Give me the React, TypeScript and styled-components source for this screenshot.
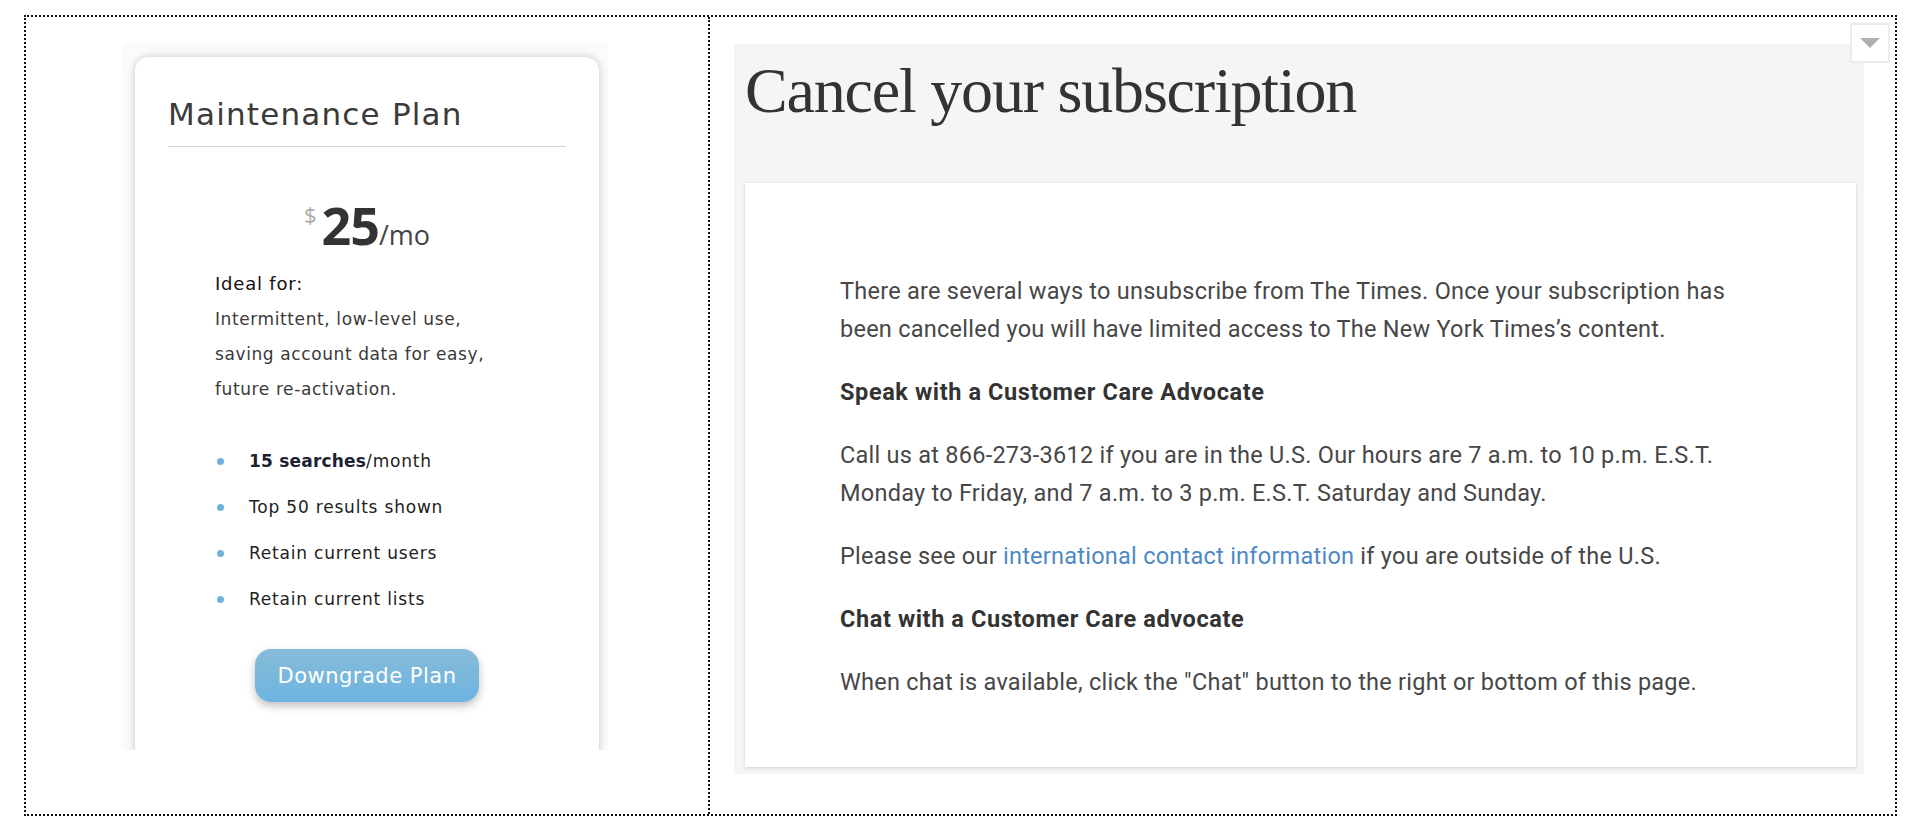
import styled, { createGlobalStyle } from 'styled-components';

const GlobalStyle = createGlobalStyle`
  html, body {
    margin: 0;
    padding: 0;
    background: #fff;
  }
  body {
    font-family: 'Liberation Sans', Arial, sans-serif;
  }
`;

const Frame = styled.div`
  margin: 15px 0 0 24px;
  width: 1873px;
  height: 801px;
  box-sizing: border-box;
  border: 2px dotted #111;
  display: grid;
  grid-template-columns: 682px 1fr;
`;

const LeftCell = styled.div`
  padding: 26px 0 0 96px;
  box-sizing: border-box;
`;

const CardClip = styled.div`
  width: 486px;
  height: 707px;
  overflow: hidden;
  padding: 14px 9px 0 13px;
  box-sizing: border-box;
  background: #fbfbfb;
`;

const PlanCard = styled.div`
  height: 760px;
  background: #fff;
  border-radius: 14px;
  box-shadow: 0 0 9px rgba(0, 0, 0, 0.22);
  padding: 39px 33px 0;
  box-sizing: border-box;
  display: flex;
  flex-direction: column;
  font-family: 'DejaVu Sans', 'Noto Sans', sans-serif;
  color: #333;
`;

const PlanTitle = styled.div`
  font-size: 31px;
  line-height: 36px;
  letter-spacing: 1.2px;
  color: #3a3a3a;
`;

const Rule = styled.div`
  margin-top: 14px;
  height: 1px;
  background: #d6d6d6;
`;

const PriceRow = styled.div`
  margin-top: 52px;
  height: 52px;
  display: flex;
  justify-content: center;
  align-items: baseline;
  line-height: 52px;
  font-family: 'Open Sans', sans-serif;
  color: #333;
`;

const Currency = styled.span`
  font-size: 22px;
  color: #aaa;
  align-self: flex-start;
  line-height: 22px;
  margin-top: 4px;
  margin-right: 5px;
`;

const Amount = styled.span`
  font-size: 52px;
  font-weight: 700;
  letter-spacing: -1px;
`;

const Period = styled.span`
  font-size: 27px;
  font-weight: 400;
  color: #444;
`;

const IdealBlock = styled.div`
  margin: 21px 0 0 47px;
`;

const IdealLabel = styled.div`
  font-size: 18px;
  line-height: 24px;
  letter-spacing: 0.8px;
  color: #111;
`;

const IdealText = styled.div`
  margin-top: 6px;
  font-size: 17px;
  line-height: 35px;
  letter-spacing: 0.6px;
  color: #3a3a3a;
`;

const FeatureList = styled.ul`
  list-style: none;
  margin: 31px 0 0 47px;
  padding: 0;
`;

const Feature = styled.li`
  display: flex;
  align-items: center;
  height: 46px;
  font-size: 17px;
  letter-spacing: 0.8px;
  color: #222;

  &::before {
    content: '';
    width: 7px;
    height: 7px;
    border-radius: 50%;
    background: #6fb0dc;
    margin: 0 25px 0 2px;
    flex: 0 0 auto;
  }

  b {
    color: #1d2233;
    letter-spacing: 0.2px;
  }
`;

const DowngradeButton = styled.button`
  margin: 27px auto 0;
  width: 224px;
  height: 53px;
  border: none;
  border-radius: 16px;
  background: linear-gradient(#88bbd8, #6cb4e1);
  box-shadow: 0 4px 8px rgba(0, 0, 0, 0.25);
  color: #fff;
  font-family: 'DejaVu Sans', 'Noto Sans', sans-serif;
  font-size: 21px;
  letter-spacing: 0.5px;
  padding: 0;
  cursor: pointer;
`;

const RightCell = styled.div`
  position: relative;
  border-left: 2px dotted #111;
  padding: 27px 31px 0 24px;
  box-sizing: border-box;
`;

const MenuToggle = styled.div`
  position: absolute;
  top: 6px;
  right: 5px;
  width: 40px;
  height: 40px;
  box-sizing: border-box;
  border: 2px solid #ececec;
  background: #fff;
  display: flex;
  align-items: center;
  justify-content: center;
`;

const GrayPanel = styled.div`
  height: 730px;
  background: #f5f5f3;
  padding: 15px 8px 7px 11px;
  box-sizing: border-box;
  display: flex;
  flex-direction: column;
`;

const PageTitle = styled.h1`
  margin: 0;
  font-family: 'Liberation Serif', 'Times New Roman', serif;
  font-weight: 400;
  font-size: 64px;
  line-height: 64px;
  letter-spacing: -1.2px;
  color: #333;
`;

const InfoCard = styled.div`
  margin-top: 60px;
  flex: 1;
  background: #fff;
  box-shadow: 0 1px 3px rgba(0, 0, 0, 0.16);
  padding: 89px 40px 0 95px;
  box-sizing: border-box;
  font-family: Roboto, 'Liberation Sans', sans-serif;
  color: #474747;
`;

const Para = styled.p`
  margin: 0 0 25px;
  font-size: 23.5px;
  line-height: 38px;
  letter-spacing: 0.25px;
`;

const SubHead = styled.h3`
  margin: 0 0 25px;
  font-size: 23.5px;
  line-height: 38px;
  letter-spacing: 0.6px;
  font-weight: 700;
  color: #333;
`;

const Link = styled.a`
  color: #4f89c4;
  text-decoration: none;
`;

const features = [
  { key: 'searches', bold: '15 searches', rest: '/month' },
  { key: 'top', bold: '', rest: 'Top 50 results shown' },
  { key: 'users', bold: '', rest: 'Retain current users' },
  { key: 'lists', bold: '', rest: 'Retain current lists' },
];

export default function App() {
  return (
    <>
      <GlobalStyle />
      <Frame>
        <LeftCell>
          <CardClip>
            <PlanCard>
              <PlanTitle>Maintenance Plan</PlanTitle>
              <Rule />
              <PriceRow>
                <Currency>$</Currency>
                <Amount>25</Amount>
                <Period>/mo</Period>
              </PriceRow>
              <IdealBlock>
                <IdealLabel>Ideal for:</IdealLabel>
                <IdealText>
                  Intermittent, low-level use,
                  <br />
                  saving account data for easy,
                  <br />
                  future re-activation.
                </IdealText>
              </IdealBlock>
              <FeatureList>
                {features.map((f) => (
                  <Feature key={f.key}>
                    <span>
                      {f.bold && <b>{f.bold}</b>}
                      {f.rest}
                    </span>
                  </Feature>
                ))}
              </FeatureList>
              <DowngradeButton type="button">Downgrade Plan</DowngradeButton>
            </PlanCard>
          </CardClip>
        </LeftCell>

        <RightCell>
          <GrayPanel>
            <PageTitle>Cancel your subscription</PageTitle>
            <InfoCard>
              <Para>
                There are several ways to unsubscribe from The Times. Once your subscription has
                <br />
                been cancelled you will have limited access to The New York Times’s content.
              </Para>
              <SubHead>Speak with a Customer Care Advocate</SubHead>
              <Para>
                Call us at 866-273-3612 if you are in the U.S. Our hours are 7 a.m. to 10 p.m. E.S.T.
                <br />
                Monday to Friday, and 7 a.m. to 3 p.m. E.S.T. Saturday and Sunday.
              </Para>
              <Para>
                Please see our <Link href="#">international contact information</Link> if you are
                outside of the U.S.
              </Para>
              <SubHead>Chat with a Customer Care advocate</SubHead>
              <Para>When chat is available, click the "Chat" button to the right or bottom of this page.</Para>
            </InfoCard>
          </GrayPanel>
          <MenuToggle>
            <svg width="20" height="10" viewBox="0 0 20 10">
              <path d="M0 0 L20 0 L10 10 Z" fill="#b0b0b0" />
            </svg>
          </MenuToggle>
        </RightCell>
      </Frame>
    </>
  );
}
